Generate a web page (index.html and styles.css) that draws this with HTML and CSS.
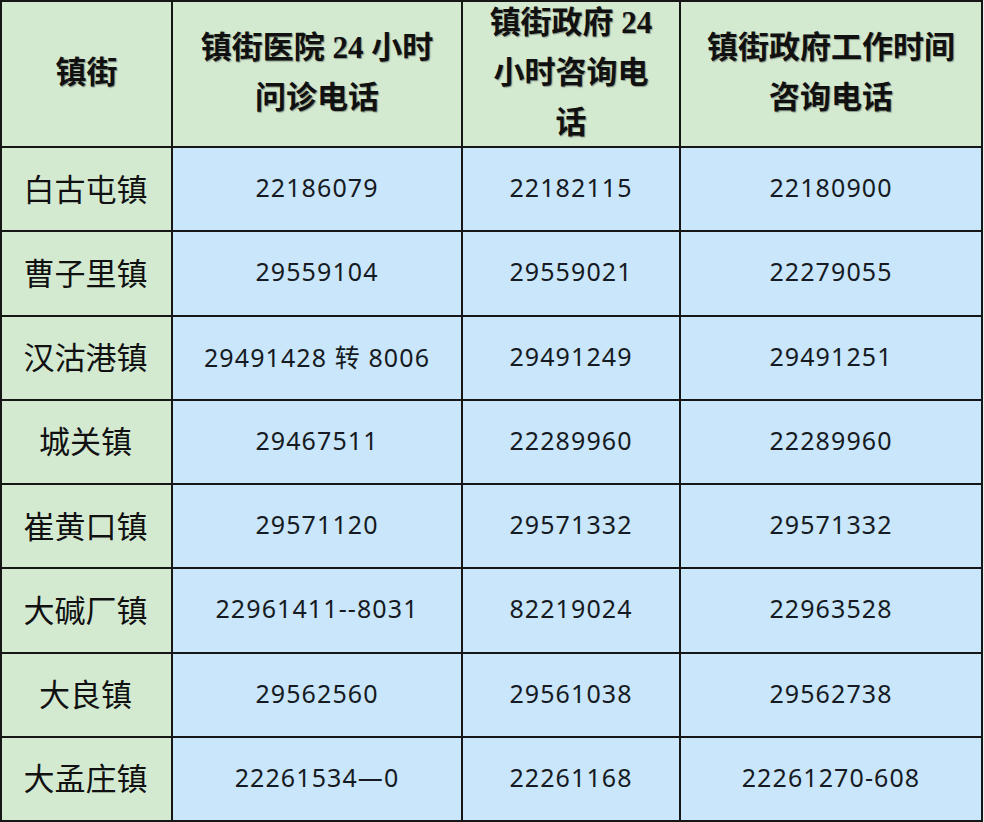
FILE: index.html
```html
<!DOCTYPE html>
<html lang="zh-CN">
<head>
<meta charset="utf-8">
<title>镇街电话</title>
<link rel="stylesheet" href="styles.css">
</head>
<body>
<div class="table">
  <div class="cell head">镇街</div>
  <div class="cell head">镇街医院 24 小时问诊电话</div>
  <div class="cell head">镇街政府 24 小时咨询电话</div>
  <div class="cell head">镇街政府工作时间咨询电话</div>

  <div class="cell town">白古屯镇</div>
  <div class="cell num">22186079</div>
  <div class="cell num">22182115</div>
  <div class="cell num">22180900</div>

  <div class="cell town">曹子里镇</div>
  <div class="cell num">29559104</div>
  <div class="cell num">29559021</div>
  <div class="cell num">22279055</div>

  <div class="cell town">汉沽港镇</div>
  <div class="cell num">29491428 转 8006</div>
  <div class="cell num">29491249</div>
  <div class="cell num">29491251</div>

  <div class="cell town">城关镇</div>
  <div class="cell num">29467511</div>
  <div class="cell num">22289960</div>
  <div class="cell num">22289960</div>

  <div class="cell town">崔黄口镇</div>
  <div class="cell num">29571120</div>
  <div class="cell num">29571332</div>
  <div class="cell num">29571332</div>

  <div class="cell town">大碱厂镇</div>
  <div class="cell num">22961411--8031</div>
  <div class="cell num">82219024</div>
  <div class="cell num">22963528</div>

  <div class="cell town">大良镇</div>
  <div class="cell num">29562560</div>
  <div class="cell num">29561038</div>
  <div class="cell num">29562738</div>

  <div class="cell town">大孟庄镇</div>
  <div class="cell num">22261534—0</div>
  <div class="cell num">22261168</div>
  <div class="cell num">22261270-608</div>
</div>
</body>
</html>
```

FILE: styles.css
```css
html, body {
  margin: 0;
  padding: 0;
  background: #e9ecee;
  overflow: hidden;
}

.table {
  box-sizing: border-box;
  width: 983px;
  height: 822px;
  padding: 2px;
  display: grid;
  grid-template-columns: 169px 288px 216px 300px;
  grid-template-rows: 144px repeat(8, 1fr);
  gap: 2px;
  background: #161616;
}

.cell {
  display: flex;
  align-items: center;
  justify-content: center;
  text-align: center;
  overflow: visible;
  color: #111;
}

.head {
  background: #d3ead1;
  font-family: "Liberation Serif", "Noto Sans CJK SC", serif;
  font-weight: 700;
  font-size: 31px;
  line-height: 50px;
  padding: 0 20px 3px;
  text-shadow: 1px 1px 1px rgba(0, 0, 0, 0.35);
}

.town {
  background: #d3ead1;
  font-family: "Noto Sans CJK SC", sans-serif;
  font-size: 31px;
  font-weight: 400;
  padding-bottom: 4px;
  padding-right: 2px;
}

.num {
  background: #c9e6fb;
  font-family: "Noto Sans", "Noto Sans CJK SC", sans-serif;
  font-size: 25px;
  letter-spacing: 1.1px;
  color: #161a22;
  padding-bottom: 4px;
}
```
